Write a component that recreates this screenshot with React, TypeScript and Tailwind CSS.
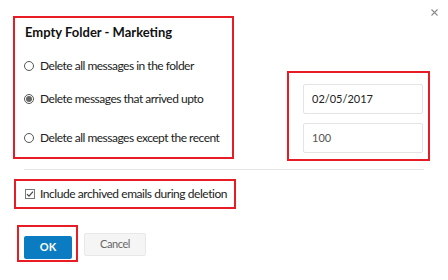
import React from 'react';

const RED = 'border-[#e81c24]';

const Radio: React.FC<{ checked?: boolean }> = ({ checked }) => (
  <span className="flex h-[10px] w-[10px] shrink-0 items-center justify-center rounded-full border border-[#555] bg-white">
    {checked && <span className="h-[6px] w-[6px] rounded-full bg-[#666]" />}
  </span>
);

const Option: React.FC<{ label: string; checked?: boolean; className?: string }> = ({
  label,
  checked,
  className,
}) => (
  <div className={`flex h-[20px] items-center gap-[6px] pl-[9px] ${className ?? ''}`}>
    <Radio checked={checked} />
    <span className="whitespace-nowrap text-[12px] tracking-[-0.5px] text-[#222]">{label}</span>
  </div>
);

export default function App() {
  return (
    <div className="relative h-[280px] w-[448px] overflow-hidden bg-white font-['Lato','Liberation_Sans',sans-serif]">
      <button className="absolute right-[10px] top-[9px]">
        <svg width="7" height="7" viewBox="0 0 7 7">
          <path d="M0.5 0.5 L6.5 6.5 M6.5 0.5 L0.5 6.5" stroke="#8a8a8a" strokeWidth="1.1" />
        </svg>
      </button>

      <div className="flex pl-[13px] pt-[16px]">
        <div className={`h-[143px] w-[221px] border-2 ${RED}`}>
          <div className="pl-[10px] pt-[4px] text-[13px] font-bold leading-[20px] text-[#111]">
            Empty Folder - Marketing
          </div>
          <Option className="mt-[14px]" label="Delete all messages in the folder" />
          <Option className="mt-[13px]" checked label="Delete messages that arrived upto" />
          <Option className="mt-[19px]" label="Delete all messages except the recent" />
        </div>

        <div className={`ml-[53px] mt-[55px] flex h-[90px] w-[143px] flex-col gap-[9px] border-2 ${RED} pl-[14px] pt-[11px]`}>
          <div className="flex h-[30px] w-[120px] items-center rounded-[2px] border border-[#e4e4e4] pl-[8px] text-[11px] text-[#222]">
            02/05/2017
          </div>
          <div className="flex h-[30px] w-[120px] items-center rounded-[2px] border border-[#e4e4e4] pl-[8px] text-[11px] text-[#555]">
            100
          </div>
        </div>
      </div>

      <div className="mx-[24px] mt-[8px] h-px bg-[#e6e6e6]" />

      <div className={`ml-[14px] mt-[9px] flex h-[30px] w-[222px] items-center gap-[5px] border-2 ${RED} pl-[9px]`}>
        <span className="flex h-[10px] w-[10px] shrink-0 items-center justify-center border border-[#777] bg-white">
          <svg width="8" height="8" viewBox="0 0 8 8">
            <path d="M1 4.2 L3 6.2 L7 1.6" fill="none" stroke="#444" strokeWidth="1.2" />
          </svg>
        </span>
        <span className="whitespace-nowrap text-[12px] tracking-[-0.45px] text-[#222]">
          Include archived emails during deletion
        </span>
      </div>

      <div className="ml-[17px] mt-[16px] flex items-start gap-[6px]">
        <div className={`h-[37px] w-[61px] border-2 ${RED} pl-[5px] pt-[6px]`}>
          <button className="h-[23px] w-[48px] rounded-[2px] bg-[#0b7cc1] text-[11px] font-bold text-white">
            OK
          </button>
        </div>
        <button className="mt-[8px] h-[23px] w-[62px] rounded-[2px] border border-[#e8e8e8] bg-[#f5f5f5] text-[11px] tracking-[-0.4px] text-[#666]">
          Cancel
        </button>
      </div>
    </div>
  );
}
